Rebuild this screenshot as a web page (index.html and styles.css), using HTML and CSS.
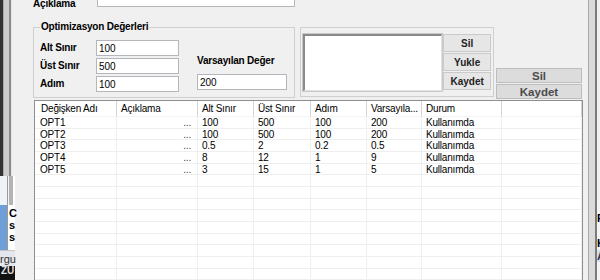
FILE: index.html
```html
<!DOCTYPE html>
<html>
<head>
	<title>Optimizasyon Değerleri</title>
	<meta charset="utf-8">
	<link rel="stylesheet" href="styles.css">
</head>
<body>
	<div class="frame-left"></div>
	<section class="form">
		<div class="row-top">
			<label class="lbl lbl-desc">Açıklama</label>
			<input class="txt txt-desc" type="text">
		</div>
		<div class="row-mid">
			<fieldset class="group">
				<legend>Optimizasyon Değerleri</legend>
				<div class="grid">
					<label class="lbl">Alt Sınır</label>
					<input class="txt" value="100">
					<span></span>
					<label class="lbl">Üst Sınır</label>
					<input class="txt" value="500">
					<label class="lbl lbl-def">Varsayılan Değer</label>
					<label class="lbl">Adım</label>
					<input class="txt" value="100">
					<input class="txt txt-def" value="200">
				</div>
			</fieldset>
			<div class="group2">
				<div class="listbox"></div>
				<div class="btns">
					<button>Sil</button>
					<button>Yukle</button>
					<button>Kaydet</button>
				</div>
			</div>
			<div class="btns-right">
				<button>Sil</button>
				<button>Kaydet</button>
			</div>
		</div>
		<div class="list">
			<div class="row head">
				<span>Değişken Adı</span><span>Açıklama</span><span>Alt Sınır</span><span>Üst Sınır</span><span>Adım</span><span>Varsayıla...</span><span>Durum</span><span></span>
			</div>
			<div class="row"><span>OPT1</span><span class="dots">...</span><span>100</span><span>500</span><span>100</span><span>200</span><span>Kullanımda</span><span></span></div>
			<div class="row"><span>OPT2</span><span class="dots">...</span><span>100</span><span>500</span><span>100</span><span>200</span><span>Kullanımda</span><span></span></div>
			<div class="row"><span>OPT3</span><span class="dots">...</span><span>0.5</span><span>2</span><span>0.2</span><span>0.5</span><span>Kullanımda</span><span></span></div>
			<div class="row"><span>OPT4</span><span class="dots">...</span><span>8</span><span>12</span><span>1</span><span>9</span><span>Kullanımda</span><span></span></div>
			<div class="row"><span>OPT5</span><span class="dots">...</span><span>3</span><span>15</span><span>1</span><span>5</span><span>Kullanımda</span><span></span></div>
			<div class="row"><span></span><span></span><span></span><span></span><span></span><span></span><span></span><span></span></div>
			<div class="row"><span></span><span></span><span></span><span></span><span></span><span></span><span></span><span></span></div>
			<div class="row"><span></span><span></span><span></span><span></span><span></span><span></span><span></span><span></span></div>
			<div class="row"><span></span><span></span><span></span><span></span><span></span><span></span><span></span><span></span></div>
			<div class="row"><span></span><span></span><span></span><span></span><span></span><span></span><span></span><span></span></div>
			<div class="row"><span></span><span></span><span></span><span></span><span></span><span></span><span></span><span></span></div>
			<div class="row"><span></span><span></span><span></span><span></span><span></span><span></span><span></span><span></span></div>
			<div class="row"><span></span><span></span><span></span><span></span><span></span><span></span><span></span><span></span></div>
			<div class="row"><span></span><span></span><span></span><span></span><span></span><span></span><span></span><span></span></div>
			<div class="row"><span></span><span></span><span></span><span></span><span></span><span></span><span></span><span></span></div>
		</div>
	</section>
	<div class="frame-right"></div>

	<!-- windows lying behind the form -->
	<div class="behind-left">
		<div class="bl-scroll"></div>
		<div class="bl-text"><b>C</b><b>s</b><b>s</b></div>
		<div class="bl-band">rgu</div>
		<div class="bl-bar">ZU</div>
	</div>
	<div class="behind-right">
		<b>R</b><b>K</b><b class="br-sel">A</b>
	</div>
</body>
</html>
```

FILE: styles.css
```css
:root{
	--bg: #f0f0f0;
	--group-line: #cfcfcf;
	--grid-line: #efefef;
}
*{
	margin: 0;
	padding: 0;
	box-sizing: border-box;
}
html, body{
	width: 600px;
	height: 280px;
	overflow: hidden;
}
body{
	background: var(--bg);
	font-family: "Liberation Sans", Arial, sans-serif;
	font-size: 10px;
	color: #000;
	display: flex;
	position: relative;
}
.frame-left{
	width: 12px;
	flex: none;
	background: linear-gradient(to right, #333 0, #333 3px, #a8a8a8 3px, #a8a8a8 4px, #cdcdcd 4px, #cdcdcd 9px, #8c8c8c 9px, #8c8c8c 11px, #e4e4e4 11px);
}
.frame-right{
	flex: 1;
	background: linear-gradient(to right, #a9a9a9 0, #a9a9a9 1px, #dadada 1px, #dadada 7px, #7a7a7a 7px, #7a7a7a 9px, #f0f0f0 9px);
}
.form{
	width: 576px;
	flex: none;
	padding: 0 6px 0 21px;
	display: flex;
	flex-direction: column;
}

/* top row */
.row-top{
	display: flex;
	align-items: flex-start;
	height: 16px;
	margin-top: -9px;
}
.lbl{
	font-weight: bold;
	line-height: 16px;
	letter-spacing: -0.2px;
	white-space: nowrap;
}
.lbl-desc{
	width: 64px;
	line-height: 12px;
	margin-top: 7px;
}
.txt{
	height: 16px;
	border: 1px solid #b4b6bb;
	background: #fff;
	font-family: "Liberation Sans", Arial, sans-serif;
	font-size: 10px;
	padding: 0 2px;
	outline: none;
	width: 83px;
}
.txt-desc{
	width: 198px;
}

/* groups */
.row-mid{
	display: flex;
	align-items: flex-start;
	height: 79px;
	margin-top: 14px;
}
.group{
	width: 262px;
	border: 1px solid var(--group-line);
	padding: 7px 6px 5px 6px;
}
.group legend{
	font-weight: bold;
	line-height: 12px;
	padding: 0 1px;
	letter-spacing: -0.2px;
}
.grid{
	display: grid;
	grid-template-columns: 56px 101px 90px;
	grid-auto-rows: 16px;
	row-gap: 2px;
}
.lbl-def{
	line-height: 12px;
	margin-top: -3px;
}
.txt-def{
	width: 90px;
	margin-top: -2px;
}
.group2{
	width: 194px;
	height: 70px;
	margin: 6px 0 0 5px;
	border: 1px solid var(--group-line);
	padding: 6px 2px;
	display: flex;
	gap: 1px;
}
.listbox{
	width: 140px;
	height: 57px;
	background: #fff;
	border-top: 2px solid #8a8a8a;
	border-left: 2px solid #8a8a8a;
	border-right: 1px solid #e2e2e2;
	border-bottom: 1px solid #e2e2e2;
	box-shadow: 0 0 0 1px #c9c9c9;
}
.btns{
	display: flex;
	flex-direction: column;
	gap: 1px;
	width: 48px;
}
button{
	font-family: "Liberation Sans", Arial, sans-serif;
	font-weight: bold;
	font-size: 10px;
	color: #222;
	background: #e6e6e6;
	border: 1px solid #cacaca;
	height: 18px;
}
.btns-right{
	display: flex;
	flex-direction: column;
	gap: 1px;
	width: 86px;
	margin: 47px 0 0 2px;
}
.btns-right button{
	height: 15px;
	font-size: 11.5px;
	color: #4b4b4b;
	background: #dcdcdc;
	border-color: #bdbdbd;
	line-height: 12px;
}

/* list view */
.list{
	flex: 1;
	margin-left: 1px;
	width: 549px;
	background: #fff;
	border: 1px solid #8e8f8f;
	border-bottom: none;
	overflow: hidden;
}
.row{
	display: grid;
	grid-template-columns: 82px 81px 56px 57px 56px 55px 80px 1fr;
	height: 11.667px;
	line-height: 11px;
	letter-spacing: -0.2px;
	white-space: nowrap;
}
.row span{
	border-right: 1px solid var(--grid-line);
	border-bottom: 1px solid var(--grid-line);
	padding-left: 4px;
	overflow: hidden;
}
.row span:first-child{
	padding-left: 5px;
}
.row .dots{
	text-align: right;
	padding-right: 6px;
	color: #444;
}
.row.head{
	height: 16px;
	line-height: 16px;
}
.row.head span{
	border-right-color: #d5d5d5;
	border-bottom-color: #f4f4f4;
}
.row.head span:first-child{
	padding-left: 6px;
}

/* windows behind */
.behind-left{
	position: absolute;
	left: 0;
	top: 176px;
	width: 15px;
	height: 104px;
	display: flex;
	flex-direction: column;
	background: #fff;
}
.bl-scroll{
	height: 29px;
	background: linear-gradient(to right, #eef3f8 0, #eef3f8 7px, #9a9a9a 7px, #9a9a9a 8px, #f4f4f4 8px, #f4f4f4 9px, #b3b3b3 9px, #b3b3b3 13px, #fff 13px);
}
.bl-text{
	height: 45px;
	display: flex;
	flex-direction: column;
	padding: 3px 0 0 9px;
	gap: 1px;
	font-size: 11px;
	line-height: 11px;
	background: linear-gradient(to right, #6d9fd6 0, #6d9fd6 7px, #9a9a9a 7px, #9a9a9a 8px, #fff 8px);
}
.bl-band{
	height: 16px;
	background: #e3e6ea;
	font-size: 11px;
	line-height: 16px;
	color: #333;
	border-top: 1px solid #c4c4c4;
}
.bl-bar{
	flex: 1;
	background: #111;
	color: #ddd;
	font-weight: bold;
	font-size: 10px;
	line-height: 10px;
	padding-left: 1px;
}
.behind-right{
	position: absolute;
	right: 0;
	top: 200px;
	width: 3px;
	height: 80px;
	background: #f4f4f4;
	display: flex;
	flex-direction: column;
	overflow: hidden;
	font-size: 11px;
	line-height: 12px;
	padding-top: 12px;
}
.behind-right b + b{
	margin-top: 13px;
}
.behind-right .br-sel{
	margin-top: 1px;
	background: #cfe0f1;
	color: #335;
}
```
